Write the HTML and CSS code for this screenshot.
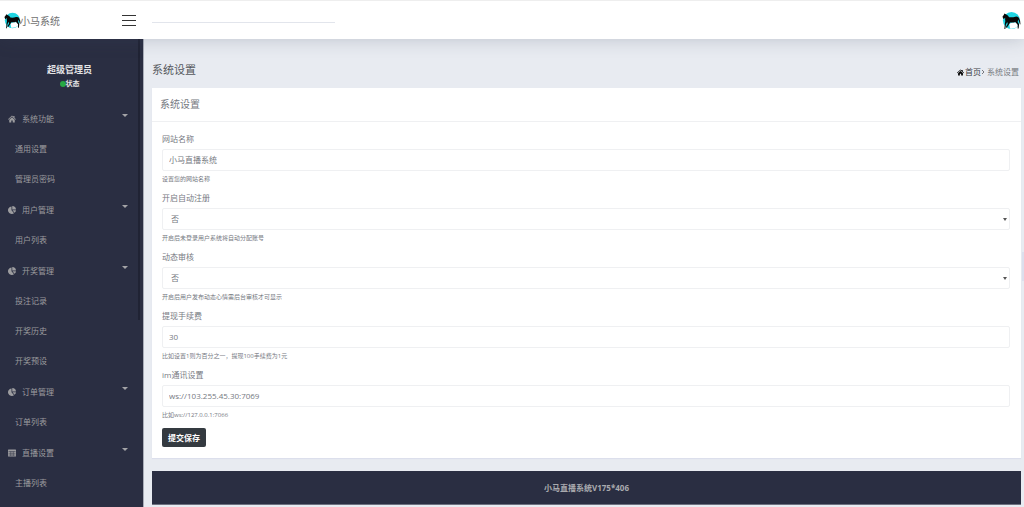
FILE: index.html
```html
<!DOCTYPE html>
<html lang="zh-CN">
<head>
<meta charset="utf-8">
<title>系统设置</title>
<link rel="stylesheet" href="styles.css">
</head>
<body>
<svg class="symbols" aria-hidden="true">
  <symbol id="horse" viewBox="0 0 40 40">
    <circle cx="20" cy="20" r="18" fill="#1fd5e2"/>
    <path fill="#fff" d="M15 27l7-3 9 0 3 7q-6 7-17 6z"/>
    <path fill="#080808" d="M1 12l3-4 1-3 3 2q5 2 7 6 7 1 13-1 6-1 8 3 3 5 3 14l-2-3q-1-6-3-8l-1 5 3 5-1 9h-2l0-8-5-6q-6 2-11 1l-2 4-5 7-2-1 4-7-1-4-3 6-1 9H5l1-11 1-6q-1-4 0-7l-4 3z"/>
  </symbol>
  <symbol id="home" viewBox="0 0 16 16">
    <path fill="currentColor" d="M8 1l2.500 2.300V2H13v3.600L16 8.500l-1 1-7-6.500L1 9.500l-1-1z"/>
    <path fill="currentColor" d="M8 4.500l5.500 5V15h-4v-4h-3v4h-4V9.500z"/>
  </symbol>
  <symbol id="pie" viewBox="0 0 16 16">
    <path fill="currentColor" d="M7 1v7.500l5 6A7.500 7.500 0 1 1 7 1z"/>
    <path fill="currentColor" d="M8.500 0a7.500 7.500 0 0 1 7.500 7H8.500z"/>
    <path fill="currentColor" d="M9 8.500h7a7 7 0 0 1-3 5z"/>
  </symbol>
  <symbol id="table" viewBox="0 0 16 16">
    <rect x="0" y="1" width="16" height="14" rx="1" fill="currentColor"/>
    <path stroke="#2a2e42" fill="none" d="M1 5h14M1 8.500h14M1 12h14M5.500 5v9M10.500 5v9"/>
  </symbol>
</svg>

<header class="topbar">
  <a class="brand" href="#"><svg class="brand-mark"><use href="#horse"/></svg><span class="brand-name">小马系统</span></a>
  <button class="menu-toggle" type="button" aria-label="菜单"><span></span><span></span><span></span></button>
  <input class="search" type="text" aria-label="搜索">
  <a class="profile" href="#" aria-label="账户"><svg class="avatar"><use href="#horse"/></svg></a>
</header>

<div class="layout">
  <aside class="sidebar">
    <div class="user">
      <div class="user-name">超级管理员</div>
      <div class="user-status"><span class="dot"></span>状态</div>
    </div>
    <nav class="menu">
      <a class="group" href="#"><svg class="icon"><use href="#home"/></svg>系统功能<span class="caret"></span></a>
      <a class="item" href="#">通用设置</a>
      <a class="item" href="#">管理员密码</a>
      <a class="group" href="#"><svg class="icon"><use href="#pie"/></svg>用户管理<span class="caret"></span></a>
      <a class="item" href="#">用户列表</a>
      <a class="group" href="#"><svg class="icon"><use href="#pie"/></svg>开奖管理<span class="caret"></span></a>
      <a class="item" href="#">投注记录</a>
      <a class="item" href="#">开奖历史</a>
      <a class="item" href="#">开奖预设</a>
      <a class="group" href="#"><svg class="icon"><use href="#pie"/></svg>订单管理<span class="caret"></span></a>
      <a class="item" href="#">订单列表</a>
      <a class="group" href="#"><svg class="icon"><use href="#table"/></svg>直播设置<span class="caret"></span></a>
      <a class="item" href="#">主播列表</a>
    </nav>
    <span class="sidebar-thumb"></span>
  </aside>

  <main class="content">
    <div class="page-head">
      <h1 class="page-title">系统设置</h1>
      <nav class="crumbs"><a class="crumb-home" href="#"><svg class="crumb-icon"><use href="#home"/></svg>首页</a><svg class="chevron" viewBox="0 0 4 6"><path d="M1 1l2 2-2 2" fill="none" stroke="currentColor"/></svg><span>系统设置</span></nav>
    </div>

    <section class="card">
      <h2 class="card-title">系统设置</h2>
      <form class="form">
        <div class="field">
          <label for="site">网站名称</label>
          <input class="control" id="site" type="text" value="小马直播系统">
          <small>设置您的网站名称</small>
        </div>
        <div class="field">
          <label for="register">开启自动注册</label>
          <div class="select-wrap"><select class="control" id="register"><option>否</option><option>是</option></select><span class="arrow"></span></div>
          <small>开启后未登录用户系统将自动分配账号</small>
        </div>
        <div class="field">
          <label for="review">动态审核</label>
          <div class="select-wrap"><select class="control" id="review"><option>否</option><option>是</option></select><span class="arrow"></span></div>
          <small>开启后用户发布动态心情需后台审核才可显示</small>
        </div>
        <div class="field">
          <label for="fee">提现手续费</label>
          <input class="control" id="fee" type="text" value="30">
          <small>比如设置1则为百分之一，提现100手续费为1元</small>
        </div>
        <div class="field">
          <label for="im">im通讯设置</label>
          <input class="control" id="im" type="text" value="ws://103.255.45.30:7069">
          <small>比如ws://127.0.0.1:7066</small>
        </div>
        <button class="submit" type="button">提交保存</button>
      </form>
    </section>

    <footer class="footer">小马直播系统V175*406</footer>
  </main>
</div>
<span class="page-thumb"></span>
</body>
</html>
```

FILE: styles.css
```css
* {
  box-sizing: border-box;
}

body {
  margin: 0;
  height: 100vh;
  display: flex;
  flex-direction: column;
  overflow: hidden;
  background: #e8ebf1;
  color: #76797f;
  font: 8px/12px "Open Sans", "Noto Sans CJK SC", sans-serif;
}

a {
  color: inherit;
  text-decoration: none;
}

input,
select,
button {
  font: inherit;
  color: inherit;
}

.symbols {
  position: absolute;
  width: 0;
  height: 0;
}

.topbar {
  flex: none;
  position: relative;
  z-index: 1;
  display: flex;
  align-items: center;
  height: 39px;
  padding: 1px 3px 0 4px;
  background: #fff;
  border-top: 1px solid #eee;
  box-shadow: 0 0 18px rgba(60, 70, 90, 0.25);
}

.brand {
  display: flex;
  align-items: center;
  width: 118px;
  font-size: 10px;
  color: #707070;
}

.brand-mark {
  width: 17px;
  height: 17px;
  margin-right: -1px;
}

.menu-toggle {
  display: flex;
  flex-direction: column;
  gap: 4px;
  width: 14px;
  padding: 0;
  border: 0;
  background: none;
}

.menu-toggle span {
  height: 1px;
  background: #333;
}

.search {
  width: 183px;
  height: 12px;
  margin: 0 auto 7px 16px;
  padding: 0;
  border: 0;
  border-bottom: 1px solid #e2e5ec;
  background: none;
  outline: 0;
}

.profile,
.avatar {
  display: block;
  width: 19px;
  height: 19px;
}

.layout {
  flex: 1;
  min-height: 0;
  display: flex;
}

.sidebar {
  flex: none;
  position: relative;
  width: 144px;
  overflow: hidden;
  background: #2a2e42;
  border-right: 1px solid #a9adb8;
  color: #9c9c9f;
}

.sidebar-thumb {
  position: absolute;
  top: 0;
  right: 3px;
  width: 2px;
  height: 281px;
  background: #202334;
}

.user {
  padding: 25px 4px 13px 0;
  text-align: center;
  font-weight: bold;
  color: #e3e3e5;
}

.user-name {
  font-size: 9px;
}

.user-status {
  display: flex;
  align-items: center;
  justify-content: center;
  margin-top: 2px;
  font-size: 7px;
}

.dot {
  width: 6px;
  height: 6px;
  border-radius: 50%;
  background: #27a844;
}

.group,
.item {
  display: flex;
  align-items: center;
}

.group {
  height: 31px;
  padding: 0 15px 0 8px;
}

.item {
  height: 30px;
  padding-left: 15px;
}

.icon {
  width: 8px;
  height: 8px;
  margin-right: 6px;
}

.caret {
  margin: 0 0 7px auto;
  border: 3px solid transparent;
  border-top-color: #a4a4a7;
  border-bottom: 0;
}

.content {
  flex: 1;
  padding: 0 3px 0 8px;
}

.page-head {
  display: flex;
  justify-content: space-between;
  align-items: center;
  height: 49px;
  padding: 13px 2px 0 0;
}

.page-title,
.card-title {
  margin: 0;
  font-weight: normal;
}

.page-title {
  font-size: 11px;
  color: #55585d;
}

.crumbs,
.crumb-home {
  display: flex;
  align-items: center;
}

.crumbs {
  padding-top: 4px;
}

.crumb-home {
  color: #3d4045;
}

.crumb-icon {
  width: 7px;
  height: 7px;
  margin-right: 1px;
  color: #000;
}

.chevron {
  width: 4px;
  height: 6px;
  margin-right: 2px;
}

.card {
  background: #fff;
  box-shadow: 0 1px 1px #dcdfec;
}

.card-title {
  padding: 10px 8px 11px;
  border-bottom: 1px solid #eff0f2;
  font-size: 10px;
}

.form {
  padding: 11px 11px 11px 10px;
}

.field {
  display: grid;
  grid-template-rows: 12px 22px 9px;
  row-gap: 4px;
  margin-bottom: 8px;
}

.field small {
  font-size: 6px;
  line-height: 8px;
}

.control {
  width: 100%;
  height: 22px;
  padding: 0 6px 1px;
  border: 1px solid #eff0f2;
  border-radius: 2px;
  background: #fff;
  outline: 0;
  appearance: none;
}

.select-wrap {
  display: grid;
  align-items: center;
}

.select-wrap > * {
  grid-area: 1 / 1;
}

.select-wrap .control {
  padding-left: 8px;
}

.arrow {
  justify-self: end;
  margin-right: 3px;
  border: 2px solid transparent;
  border-top: 3px solid #555;
  border-bottom: 0;
  pointer-events: none;
}

.submit {
  display: block;
  height: 19px;
  padding: 0 6px;
  border: 0;
  border-radius: 2px;
  background: #343a40;
  color: #fff;
  font-weight: bold;
}

.footer {
  display: flex;
  align-items: center;
  justify-content: center;
  height: 34px;
  margin-top: 13px;
  background: #2a2e42;
  border-bottom: 1px solid #6d7180;
  color: #a9aaae;
  font-weight: bold;
}

.page-thumb {
  position: absolute;
  top: 252px;
  right: 0;
  width: 2px;
  height: 29px;
  background: #dcdfed;
}
```
